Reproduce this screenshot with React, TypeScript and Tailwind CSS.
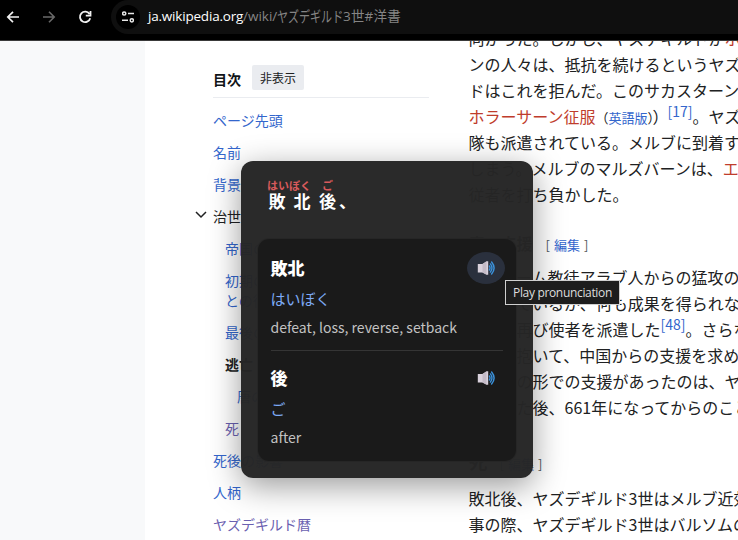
import type { ReactNode } from "react";

const jp = "font-['Noto_Sans_CJK_JP',sans-serif]";

type TocEntry = { label: ReactNode; className: string; expanded?: boolean };

const toc: TocEntry[] = [
  { label: "ページ先頭", className: "text-[#3366cc]" },
  { label: "名前", className: "text-[#3366cc]" },
  { label: "背景", className: "text-[#3366cc]" },
  { label: "治世", className: "text-[#202122]", expanded: true },
  { label: "帝国の情勢", className: "pl-3 text-[#3366cc]" },
  {
    label: (
      <>
        初期の治世
        <br />
        との後退
      </>
    ),
    className: "pl-3 text-[#3366cc]",
  },
  { label: "最後の抵抗", className: "pl-3 text-[#3366cc]" },
  { label: "逃亡", className: "pl-3 font-bold text-[#202122]" },
  { label: "唐の支援", className: "pl-6 text-[#3366cc]" },
  { label: "死", className: "pl-3 text-[#6a60b0]" },
  { label: "死後の影響", className: "text-[#3366cc]" },
  { label: "人柄", className: "text-[#3366cc]" },
  { label: "ヤズデギルド暦", className: "text-[#6a60b0]" },
];

function BrowserBar() {
  return (
    <header className="flex h-[41px] shrink-0 border-b border-[#3a3a3a] bg-black font-['Open_Sans','Noto_Sans_CJK_JP',sans-serif]">
      <div className="flex h-[34px] w-[111px] shrink-0 items-center pl-[6px]">
        <svg className="h-[14px] w-[14px]" viewBox="0 0 14 14" fill="none" stroke="#f1f1f1" strokeWidth="1.7">
          <path d="M13 7H2M7 1.8 1.8 7 7 12.2" />
        </svg>
        <svg className="ml-[22px] h-[14px] w-[14px]" viewBox="0 0 14 14" fill="none" stroke="#696969" strokeWidth="1.6">
          <path d="M1 7h11M7 1.8 12.2 7 7 12.2" />
        </svg>
        <svg className="ml-[22px] h-[14px] w-[14px]" viewBox="0 0 14 14" fill="none" stroke="#f1f1f1" strokeWidth="1.8">
          <path d="M11.5 4A5.2 5.2 0 1 0 12.2 8.2M12.5 1v4.7H7.8" />
        </svg>
      </div>
      <div className="flex h-[34px] flex-1 items-center rounded-l-full bg-[#0f0f0f] pl-[5px] text-sm whitespace-nowrap">
        <span className="flex h-6 w-6 items-center justify-center rounded-full bg-black">
          <svg className="h-3 w-3" viewBox="0 0 12 12" fill="none" stroke="#e8e8e8" strokeWidth="1.5">
            <circle cx="2.2" cy="2.5" r="1.6" />
            <path d="M6 2.5h6M0 9.3h6" />
            <circle cx="9.8" cy="9.3" r="1.6" />
          </svg>
        </span>
        <span className="ml-2 w-[95px] text-[13.5px] tracking-[-0.2px] text-white">ja.wikipedia.org</span>
        <span className="w-[34px] text-[13.5px] text-[#858585]">/wiki/</span>
        <span className="w-[66px] text-[15px] text-[#858585]">
          <span className="inline-block origin-left scale-x-[.735]">ヤズデギルド</span>
        </span>
        <span className="text-[13.5px] tracking-[0.2px] text-[#858585]">3世#洋書</span>
      </div>
    </header>
  );
}

function Contents() {
  return (
    <nav className="ml-[68px] w-[216px] shrink-0 text-sm leading-5">
      <div className="mt-[24px] flex h-[33px] items-start border-b border-[#eaecf0]">
        <h2 className="mt-[4px] font-bold text-[#101418]">目次</h2>
        <button className="ml-[11px] h-[25px] w-[52px] rounded-[2px] bg-[#eaecf0] text-xs text-[#202122]">非表示</button>
      </div>
      <ul className="mt-[6px] whitespace-nowrap">
        {toc.map((entry, i) => (
          <li key={i} className={`relative py-[6px] ${entry.className}`}>
            {entry.expanded && (
              <svg className="absolute top-[9px] -left-[18px] h-3 w-3" viewBox="0 0 12 12" fill="none" stroke="#202122" strokeWidth="1.5">
                <path d="m1 3 5 5 5-5" />
              </svg>
            )}
            {entry.label}
          </li>
        ))}
      </ul>
    </nav>
  );
}

function EditLink({ className }: { className: string }) {
  return (
    <span className={`text-[13px] font-normal text-[#54595d] ${className}`}>
      [<span className="mx-1 text-[#3366cc]">編集</span>]
    </span>
  );
}

function Line({ children }: { children: ReactNode }) {
  return <span className="block h-[26px]">{children}</span>;
}

function Cite({ children }: { children: ReactNode }) {
  return (
    <sup className="relative -top-[6px] align-baseline text-[14px] leading-none text-[#3366cc]">{children}</sup>
  );
}

function Article() {
  return (
    <main className="-mt-[16px] ml-[39.5px] w-[420px] shrink-0 text-base leading-[26px] whitespace-nowrap text-[#202122]">
      <p>
        <Line>
          向かった。しかし、ヤズデギルドが<span className="text-[#bf3c2c]">ホ</span>
        </Line>
        <Line>ンの人々は、抵抗を続けるというヤズ</Line>
        <Line>ドはこれを拒んだ。このサカスターン</Line>
        <Line>
          <span className="text-[#bf3c2c]">ホラーサーン征服</span>
          <span className="text-[13px]">
            （<span className="text-[#3366cc]">英語版</span>）
          </span>
          <span className="-ml-[8px] inline-block h-[26px] align-top">）</span>
          <span className="-ml-px">
            <Cite>[17]</Cite>
          </span>
          。ヤズ
        </Line>
        <Line>隊も派遣されている。メルブに到着す</Line>
        <Line>
          しまう。メルブのマルズバーンは、<span className="text-[#bf3c2c]">エ</span>
        </Line>
        <Line>従者を打ち負かした。</Line>
      </p>
      <h4 className="mt-[22px] h-[28px] leading-[28px] font-bold">
        唐の支援
        <EditLink className="ml-[13px]" />
      </h4>
      <p className="mt-[7px]">
        <Line>イスラーム教徒アラブ人からの猛攻の</Line>
        <Line>派遣しているが、何も成果を得られな</Line>
        <Line>
          ために再び使者を派遣した<Cite>[48]</Cite>。さらな
        </Line>
        <Line>希望を抱いて、中国からの支援を求め</Line>
        <Line>何らかの形での支援があったのは、ヤ</Line>
        <Line>派遣した後、661年になってからのこと</Line>
      </p>
      <h3 className="mt-[25px] h-[32px] text-[19px] leading-[32px] font-bold">
        死
        <EditLink className="ml-[12px]" />
      </h3>
      <p className="mt-[8px]">
        <Line>敗北後、ヤズデギルド3世はメルブ近郊</Line>
        <Line>事の際、ヤズデギルド3世はバルソムの</Line>
      </p>
    </main>
  );
}

function Speaker() {
  return (
    <svg className="h-4 w-[18px]" viewBox="0 0 18 16">
      <path d="M.8 4H5.500L9.500 1.200h1.700v13.600H9.500L5.500 12.500H.8Z" fill="#d9d1dc" />
      <path d="M5.500 4 9.500 1.600v12.800L5.500 12.500Z" fill="#c3bac6" />
      <g fill="none" stroke="#3b92dc" strokeWidth="1.400" strokeLinecap="round">
        <path d="M12.400 6q1.300 2 0 4M13.400 3.900q3.200 4.100 0 8.200M14.600 2q5 6 0 12" />
      </g>
    </svg>
  );
}

type WordProps = { word: string; reading: string; meaning: string; active?: boolean };

function Word({ word, reading, meaning, active }: WordProps) {
  return (
    <section className="relative">
      <h3 className="text-[17px] leading-[30px] font-black text-white">{word}</h3>
      <p className="h-[30px] pt-px text-[15px] leading-[30px] text-[#7daaf5]">{reading}</p>
      <p className="h-7 text-sm leading-7 text-[#c2c2c2]">{meaning}</p>
      <button
        aria-label="Play pronunciation"
        className={`absolute -top-[1px] -right-[2px] flex h-8 w-[38px] items-center justify-center rounded-[50%] ${active ? "bg-[#2a303d]" : ""}`}
      >
        <Speaker />
      </button>
    </section>
  );
}

function DictionaryPopup() {
  return (
    <aside className="absolute top-[161px] left-[241px] h-[317px] w-[292px] rounded-xl bg-[#262626]/98 px-4 shadow-[0_8px_32px_rgba(0,0,0,0.4)]">
      <div className="flex h-[77px] pt-[16px] pl-[10px] font-bold whitespace-nowrap text-white">
        <div className="w-[51px]">
          <div className="h-[15px] text-[11px] leading-[17px] text-[#d85a5c]">はいぼく</div>
          <div className="pl-[1.5px] text-[17px] leading-[18px] tracking-[8px]">敗北</div>
        </div>
        <div className="w-[20px]">
          <div className="h-[15px] pl-[4px] text-[11px] leading-[17px] text-[#d85a5c]">ご</div>
          <div className="pl-[1px] text-[17px] leading-[18px]">後</div>
        </div>
        <div className="pt-[15px] pl-px text-[17px] leading-[18px]">、</div>
      </div>
      <div className="h-[224px] rounded-xl border border-white/5 bg-[#1a1a1a]/97 pt-[14px] pr-[13px] pl-[12.5px]">
        <Word word="敗北" reading="はいぼく" meaning="defeat, loss, reverse, setback" active />
        <hr className="mt-[9px] mb-[12px] border-[#353535]" />
        <Word word="後" reading="ご" meaning="after" />
      </div>
    </aside>
  );
}

export default function App() {
  return (
    <div className={`relative flex h-[540px] w-[738px] flex-col overflow-hidden bg-white ${jp}`}>
      <BrowserBar />
      <div className="flex min-h-0 flex-1 overflow-hidden">
        <div className="w-[145px] shrink-0 bg-[#f8f9fa]" />
        <Contents />
        <Article />
      </div>
      <DictionaryPopup />
      <div className="absolute top-[280px] left-[505px] flex h-[25px] w-[115px] items-center border border-[#cfcfcf] bg-[#1d1d1d] pl-[7px] font-['Open_Sans',sans-serif] text-xs tracking-[-0.33px] whitespace-nowrap text-[#dedede]">
        Play pronunciation
      </div>
    </div>
  );
}
